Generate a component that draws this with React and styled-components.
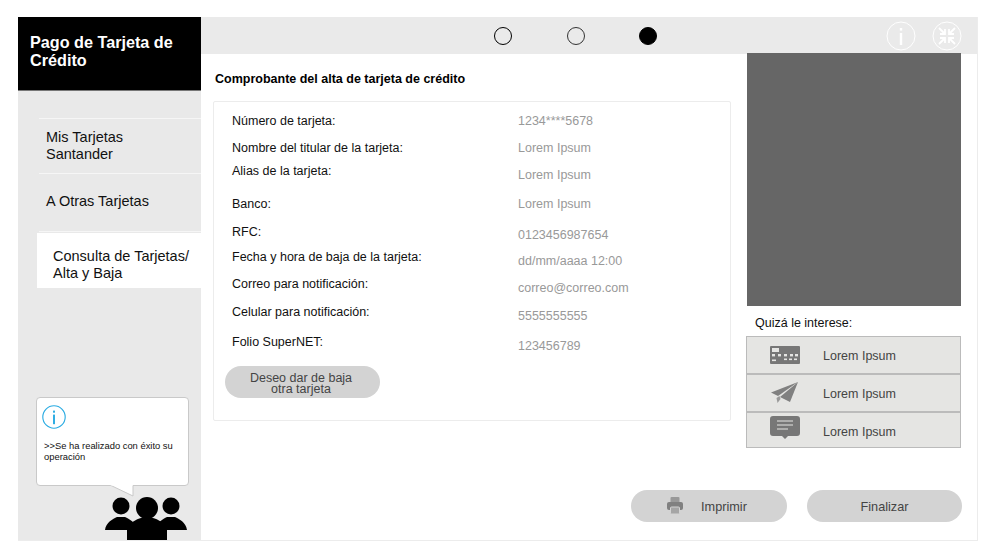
import styled, { createGlobalStyle } from 'styled-components';

const GlobalStyle = createGlobalStyle`
  html, body {
    margin: 0;
    padding: 0;
    background: #fff;
    font-family: "Liberation Sans", Arial, sans-serif;
  }
`;

const Frame = styled.div`
  display: flex;
  box-sizing: border-box;
  margin: 17px 0 0 18px;
  width: 960px;
  height: 524px;
  border-right: 1px solid #ececec;
  border-bottom: 1px solid #ececec;
`;

const Sidebar = styled.aside`
  display: flex;
  flex-direction: column;
  flex: 0 0 183px;
  background: #e9e9e9;
`;

const Brand = styled.div`
  box-sizing: border-box;
  height: 74px;
  padding: 16px 12px;
  background: #000;
  color: #fff;
  font-size: 16.2px;
  font-weight: 700;
  line-height: 18px;
  border-bottom: 1px solid #777;
`;

const Nav = styled.nav`
  display: flex;
  flex-direction: column;
  margin-top: 27px;
`;

const NavItem = styled.div`
  display: flex;
  align-items: center;
  box-sizing: border-box;
  height: ${(p) => p.$height}px;
  margin-left: ${(p) => (p.$active ? 19 : 21)}px;
  margin-bottom: ${(p) => (p.$closed ? 1 : 0)}px;
  padding-left: ${(p) => (p.$active ? 16 : 7)}px;
  padding-top: ${(p) => (p.$active ? 8 : 0)}px;
  padding-bottom: ${(p) => (p.$closed ? 3 : 0)}px;
  background: ${(p) => (p.$active ? '#fff' : 'transparent')};
  border-top: ${(p) => (p.$active ? 'none' : '1px solid #f6f6f6')};
  border-bottom: ${(p) => (p.$closed ? '1px solid #f6f6f6' : 'none')};
  color: #111;
  font-size: 14.5px;
  line-height: 17px;
`;

const Helper = styled.div`
  display: flex;
  flex-direction: column;
  margin-top: auto;
`;

const Callout = styled.div`
  position: relative;
  box-sizing: border-box;
  margin-left: 18px;
  width: 153px;
  height: 89px;
  padding: 7px 0 0 5px;
  background: #fff;
  border: 1px solid #c9c9c9;
  border-radius: 4px;
  color: #111;
  font-size: 9.4px;
  line-height: 11px;
`;

const CalloutText = styled.p`
  margin: 9px 0 0 2px;
`;

const Tail = styled.svg`
  position: absolute;
  left: 72px;
  top: 87px;
`;

const People = styled.svg`
  display: block;
  margin: 11px 0 0 87px;
`;

const Main = styled.main`
  display: flex;
  flex-direction: column;
  flex: 1;
  min-width: 0;
`;

const TopBar = styled.header`
  display: flex;
  align-items: center;
  box-sizing: border-box;
  flex: 0 0 37px;
  padding: 0 15px 0 293px;
  background: #eaeaea;
`;

const Steps = styled.div`
  display: flex;
  gap: 54.5px;
`;

const Step = styled.span`
  box-sizing: border-box;
  width: 18px;
  height: 18px;
  border-radius: 50%;
  border: ${(p) => (p.$thin ? '1px solid #333' : '1.5px solid #000')};
  background: ${(p) => (p.$done ? '#000' : 'transparent')};
`;

const TopIcons = styled.div`
  display: flex;
  gap: 16px;
  margin-left: auto;
`;

const Body = styled.div`
  display: flex;
  flex: 1;
  min-height: 0;
`;

const Content = styled.section`
  box-sizing: border-box;
  flex: 0 0 545px;
  padding: 18px 0 0 12px;
`;

const Title = styled.h1`
  margin: 0 0 15px 2px;
  color: #000;
  font-size: 12.5px;
  font-weight: 700;
  line-height: 14px;
`;

const Card = styled.div`
  box-sizing: border-box;
  width: 518px;
  height: 320px;
  padding: 0 11px;
  border: 1px solid #ececec;
  border-radius: 2px;
`;

const Columns = styled.div`
  display: flex;
`;

const Column = styled.div`
  display: flex;
  flex-direction: column;
  width: ${(p) => p.$width}px;
  padding-left: ${(p) => p.$inset}px;
  box-sizing: border-box;
`;

const Label = styled.span`
  margin-top: ${(p) => p.$gap}px;
  color: #111;
  font-size: 12.5px;
  line-height: 14px;
`;

const Value = styled.span`
  margin-top: ${(p) => p.$gap}px;
  color: #999;
  font-size: 12.5px;
  line-height: 14px;
`;

const Pill = styled.button`
  display: flex;
  align-items: center;
  justify-content: center;
  gap: ${(p) => p.$gap || 0}px;
  width: ${(p) => p.$width || 155}px;
  height: 32px;
  padding: 2px ${(p) => p.$nudge || 0}px 0 0;
  border: none;
  border-radius: 16px;
  background: #d3d3d3;
  color: #444;
  font-family: inherit;
  font-size: 12.7px;
  line-height: 10.5px;
`;

const CardButton = styled(Pill)`
  margin-top: 13px;
  padding: 3px 3px 0 0;
  font-size: 12.5px;
`;

const Aside = styled.div`
  display: flex;
  flex-direction: column;
  flex: 0 0 215px;
`;

const Banner = styled.div`
  height: 253px;
  margin: -1px 0 0 1px;
  background: #666;
`;

const AsideTitle = styled.div`
  margin: 10px 0 6px 9px;
  color: #111;
  font-size: 12.5px;
  line-height: 14px;
`;

const Suggestions = styled.div`
  display: flex;
  flex-direction: column;
  box-sizing: border-box;
  height: 112px;
  border: 1px solid #bbb;
  background: #e5e5e3;
`;

const Suggestion = styled.div`
  display: flex;
  box-sizing: border-box;
  height: ${(p) => p.$height}px;
  align-items: center;
  padding-left: 23px;
  color: #444;
  font-size: 12.5px;
  & + & {
    border-top: 2px solid #bbb;
  }
`;

const SuggestionIcon = styled.svg`
  flex: 0 0 30px;
  margin: 0 23px 0 0;
  margin-bottom: ${(p) => p.$lift || 0}px;
`;

const SuggestionText = styled.span`
  margin-top: ${(p) => p.$drop || 2}px;
`;

const Footer = styled.footer`
  display: flex;
  justify-content: flex-end;
  gap: 20px;
  flex: 0 0 auto;
  padding: 0 15px 18px 0;
`;

const PrinterSvg = styled.svg`
  margin-top: -4px;
`;

function InfoIcon({ size, color, width }) {
  return (
    <svg width={size} height={size} viewBox="0 0 30 30" fill="none">
      <circle cx="15" cy="15" r="14" stroke={color} strokeWidth={width} />
      <rect x="13.8" y="12" width="2.4" height="12" fill={color} />
      <rect x="13.8" y="7" width="2.4" height="2.6" fill={color} />
    </svg>
  );
}

function CollapseIcon() {
  return (
    <svg width="30" height="30" viewBox="0 0 30 30" fill="none" stroke="#fff">
      <circle cx="15" cy="15" r="14" strokeWidth="1" />
      <g strokeWidth="1.8">
        <path d="M7 7l5.5 5.5M13 8v5H8" />
        <path d="M23 7l-5.5 5.5M17 8v5h5" />
        <path d="M7 23l5.5-5.5M13 22v-5H8" />
        <path d="M23 23l-5.5-5.5M17 22v-5h5" />
      </g>
    </svg>
  );
}

function KeyboardIcon() {
  return (
    <SuggestionIcon width="30" height="18" viewBox="0 0 30 18">
      <rect width="30" height="18" rx="1" fill="#777" />
      <rect x="2" y="2" width="7" height="4" fill="#e5e5e3" />
      {[2, 8, 14, 20, 25].map((x) => (
        <rect key={x} x={x} y="8" width="3" height="2.4" fill="#e5e5e3" />
      ))}
      <rect x="2" y="13.5" width="4" height="1.6" fill="#e5e5e3" />
      <rect x="14" y="12.5" width="3" height="1.6" fill="#e5e5e3" />
      <rect x="19" y="12.5" width="3" height="1.6" fill="#e5e5e3" />
      <rect x="24" y="12.5" width="3" height="1.6" fill="#e5e5e3" />
    </SuggestionIcon>
  );
}

function PlaneIcon() {
  return (
    <SuggestionIcon width="30" height="22" viewBox="0 0 30 22">
      <path d="M28 0L1 10.5l7 3.5L28 0z" fill="#808080" />
      <path d="M28 0L10 15l10 5L28 0z" fill="#808080" />
      <path d="M6.5 16l3-2 1 3-3 4z" fill="#999" />
    </SuggestionIcon>
  );
}

function ChatIcon() {
  return (
    <SuggestionIcon $lift={6} width="30" height="23" viewBox="0 0 30 23">
      <path
        d="M3 0h24a3 3 0 0 1 3 3v14a3 3 0 0 1-3 3H18l-3 3-3-3H3a3 3 0 0 1-3-3V3a3 3 0 0 1 3-3z"
        fill="#777"
      />
      <path d="M7 5h16M7 9h16M7 13h11" stroke="#e5e5e3" strokeWidth="1.2" />
    </SuggestionIcon>
  );
}

function PrinterIcon() {
  return (
    <PrinterSvg width="16" height="17" viewBox="0 0 16 17">
      <rect x="3.5" y="0" width="9" height="6" rx="1" fill="#999" />
      <rect x="0" y="5" width="16" height="8" rx="2" fill="#808080" />
      <rect x="3.5" y="10" width="9" height="7" rx="1" fill="#a5a5a5" stroke="#d3d3d3" strokeWidth="1" />
    </PrinterSvg>
  );
}

const labels = [
  ['Número de tarjeta:', 12],
  ['Nombre del titular de la tarjeta:', 13],
  ['Alias de la tarjeta:', 9],
  ['Banco:', 19],
  ['RFC:', 14],
  ['Fecha y hora de baja de la tarjeta:', 11],
  ['Correo para notificación:', 13],
  ['Celular para notificación:', 14],
  ['Folio SuperNET:', 16],
];

const values = [
  ['1234****5678', 12],
  ['Lorem Ipsum', 13],
  ['Lorem Ipsum', 13],
  ['Lorem Ipsum', 15],
  ['0123456987654', 17],
  ['dd/mm/aaaa 12:00', 12],
  ['correo@correo.com', 13],
  ['5555555555', 14],
  ['123456789', 16],
];

export default function App() {
  return (
    <>
      <GlobalStyle />
      <Frame>
        <Sidebar>
          <Brand>
            Pago de Tarjeta de
            <br />
            Crédito
          </Brand>
          <Nav>
            <NavItem $height={55}>
              Mis Tarjetas
              <br />
              Santander
            </NavItem>
            <NavItem $height={59} $closed>
              A Otras Tarjetas
            </NavItem>
            <NavItem $height={55} $active>
              Consulta de Tarjetas/
              <br />
              Alta y Baja
            </NavItem>
          </Nav>
          <Helper>
            <Callout>
              <InfoIcon size={24} color="#29abe2" width={1.4} />
              <CalloutText>
                &gt;&gt;Se ha realizado con éxito su
                <br />
                operación
              </CalloutText>
              <Tail width="26" height="13" viewBox="0 0 26 13">
                <path d="M1 0l23 11V0" fill="#fff" stroke="#c9c9c9" />
                <path d="M1 -1h23v1.5H2z" fill="#fff" />
              </Tail>
            </Callout>
            <People width="82" height="43" viewBox="0 0 82 43">
              <circle cx="16" cy="9" r="8.5" />
              <circle cx="66" cy="9" r="8.5" />
              <path d="M0 33c1-8 8-11 12-13h8c4 2 11 5 12 13z" />
              <path d="M50 33c2-8 8-11 12-13h8c4 2 11 5 12 13z" />
              <circle cx="42" cy="11" r="11" />
              <path d="M22 43V33c1-7 10-11 14-12h12c4 1 13 5 14 12v10z" />
            </People>
          </Helper>
        </Sidebar>
        <Main>
          <TopBar>
            <Steps>
              <Step />
              <Step $thin />
              <Step $done />
            </Steps>
            <TopIcons>
              <InfoIcon size={30} color="#fff" width={1} />
              <CollapseIcon />
            </TopIcons>
          </TopBar>
          <Body>
            <Content>
              <Title>Comprobante del alta de tarjeta de crédito</Title>
              <Card>
                <Columns>
                  <Column $width={293} $inset={7}>
                    {labels.map(([text, gap]) => (
                      <Label key={text} $gap={gap}>
                        {text}
                      </Label>
                    ))}
                  </Column>
                  <Column $width={200} $inset={0}>
                    {values.map(([text, gap], i) => (
                      <Value key={i} $gap={gap}>
                        {text}
                      </Value>
                    ))}
                  </Column>
                </Columns>
                <CardButton>
                  Deseo dar de baja
                  <br />
                  otra tarjeta
                </CardButton>
              </Card>
            </Content>
            <Aside>
              <Banner />
              <AsideTitle>Quizá le interese:</AsideTitle>
              <Suggestions>
                <Suggestion $height={36}>
                  <KeyboardIcon />
                  <SuggestionText>Lorem Ipsum</SuggestionText>
                </Suggestion>
                <Suggestion $height={38}>
                  <PlaneIcon />
                  <SuggestionText>Lorem Ipsum</SuggestionText>
                </Suggestion>
                <Suggestion $height={36}>
                  <ChatIcon />
                  <SuggestionText $drop={4}>Lorem Ipsum</SuggestionText>
                </Suggestion>
              </Suggestions>
            </Aside>
          </Body>
          <Footer>
            <Pill $width={156} $gap={18} $nudge={4}>
              <PrinterIcon />
              Imprimir
            </Pill>
            <Pill>Finalizar</Pill>
          </Footer>
        </Main>
      </Frame>
    </>
  );
}
